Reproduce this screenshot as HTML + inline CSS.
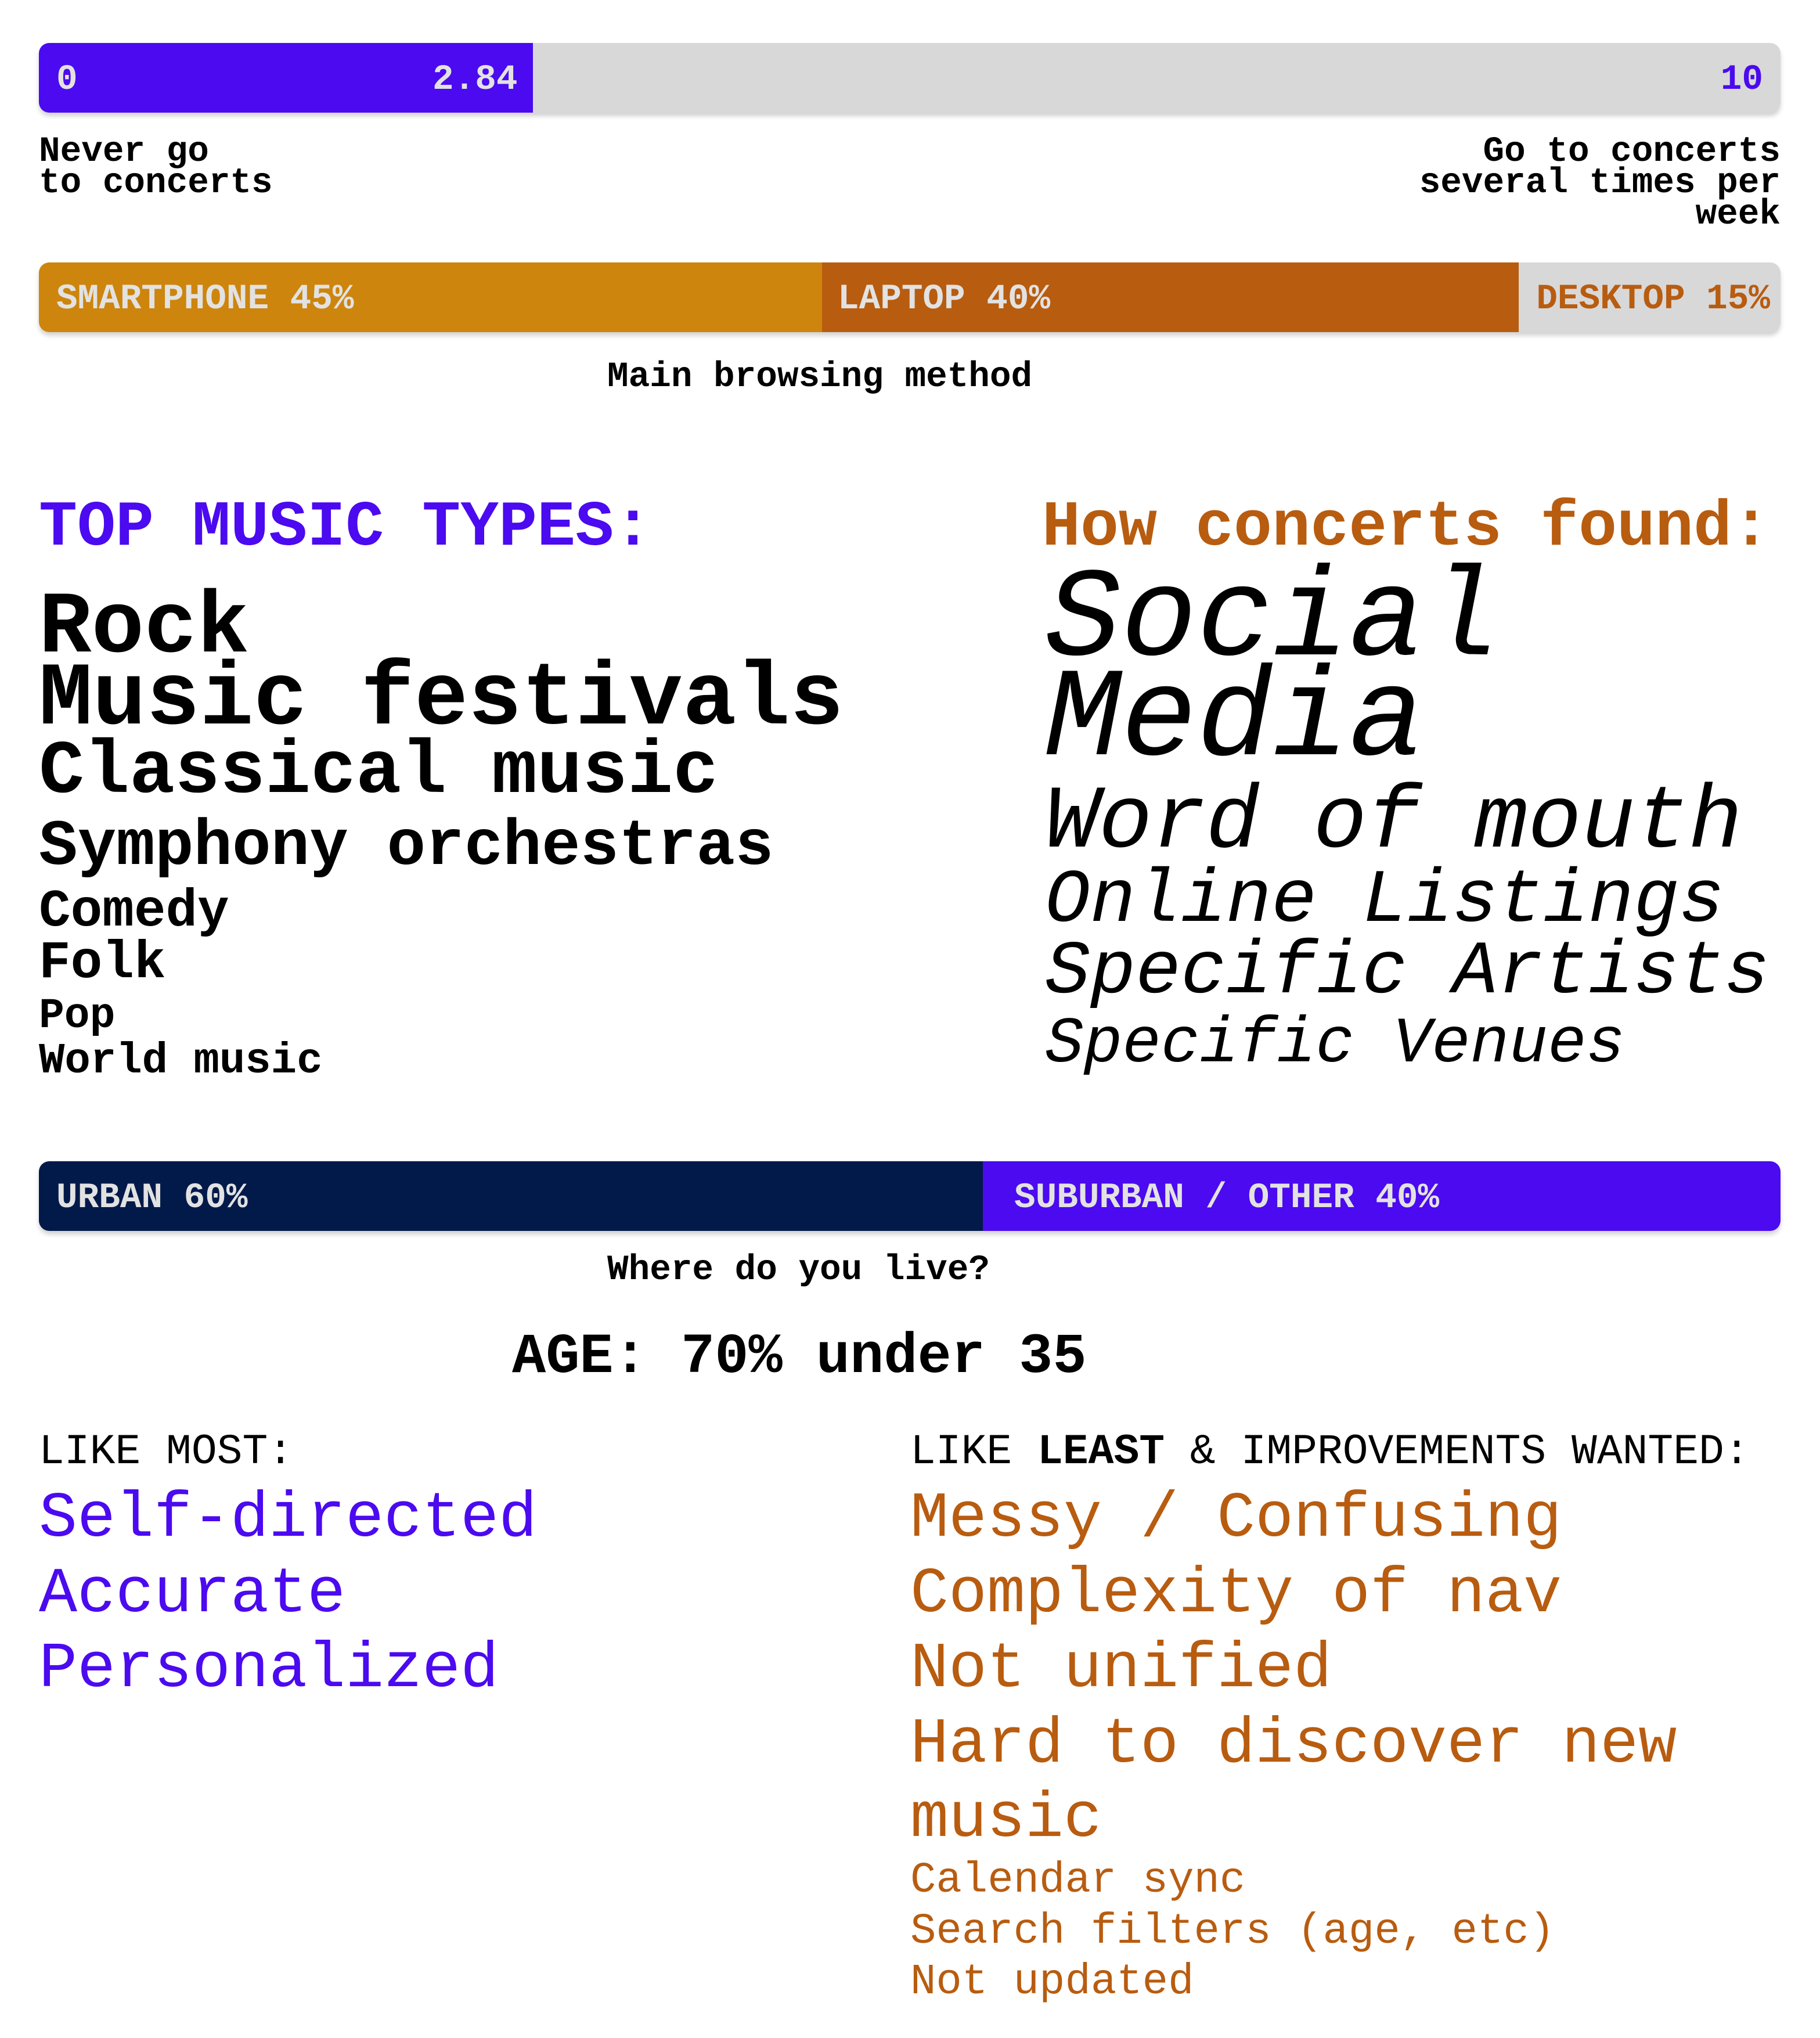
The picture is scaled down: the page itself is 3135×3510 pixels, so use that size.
<!DOCTYPE html>
<html><head><meta charset="utf-8"><style>
*{margin:0;padding:0;box-sizing:border-box}
body{width:3135px;height:3510px;background:#fff;position:relative;overflow:hidden;font-family:"Liberation Mono","Courier New",monospace;color:#000}
.t{position:absolute;white-space:nowrap;line-height:1;margin-top:7px}
.b{font-weight:bold}
.i{font-style:italic}
.bar{position:absolute;left:67px;width:3000px;height:120px;border-radius:18px;overflow:hidden;background:#d8d8d8;box-shadow:0 6px 8px rgba(0,0,0,.18)}
.seg{position:absolute;top:0;height:100%}
.bl{position:absolute;top:4px;height:120px;line-height:120px;font-weight:bold;font-size:61px;color:#e2e2e2;white-space:nowrap}
.p{color:#4b0aef}.o{color:#b85c10}
</style></head><body>

<div class="bar" style="top:74px">
  <div class="seg" style="left:0;width:851px;background:#4b0aef"></div>
  <div class="bl" style="left:30px">0</div>
  <div class="bl" style="left:678px">2.84</div>
  <div class="bl" style="right:30px;color:#4b0aef">10</div>
</div>
<div class="t b" style="left:67px;top:228px;font-size:61px;line-height:54px">Never go<br>to concerts</div>
<div class="t b" style="right:68px;top:228px;font-size:61px;line-height:54px;text-align:right">Go to concerts<br>several times per<br>week</div>

<div class="bar" style="top:452px">
  <div class="seg" style="left:0;width:1349px;background:#cd850d"></div>
  <div class="seg" style="left:1349px;width:1200px;background:#b85c0f"></div>
  <div class="bl" style="left:30px">SMARTPHONE 45%</div>
  <div class="bl" style="left:1376px">LAPTOP 40%</div>
  <div class="bl" style="right:18px;color:#b85c10">DESKTOP 15%</div>
</div>
<div class="t b" style="left:1046px;top:612px;font-size:61px">Main browsing method</div>

<div class="t b p" style="left:67px;top:848px;font-size:110px">TOP MUSIC TYPES:</div>
<div class="t b o" style="left:1795px;top:848px;font-size:110px">How concerts found:</div>

<div class="t b" style="left:67px;top:1000px;font-size:151px">Rock</div>
<div class="t b" style="left:67px;top:1122px;font-size:154px">Music festivals</div>
<div class="t b" style="left:67px;top:1259px;font-size:130px">Classical music</div>
<div class="t b" style="left:67px;top:1397px;font-size:111px">Symphony orchestras</div>
<div class="t b" style="left:67px;top:1518px;font-size:91px">Comedy</div>
<div class="t b" style="left:67px;top:1607px;font-size:91px">Folk</div>
<div class="t b" style="left:67px;top:1706px;font-size:73px">Pop</div>
<div class="t b" style="left:67px;top:1784px;font-size:74px">World music</div>

<div class="t i" style="left:1800px;top:954px;font-size:218px">Social</div>
<div class="t i" style="left:1800px;top:1126px;font-size:218px">Media</div>
<div class="t i" style="left:1800px;top:1334px;font-size:154px">Word of mouth</div>
<div class="t i" style="left:1800px;top:1481px;font-size:130px">Online Listings</div>
<div class="t i" style="left:1800px;top:1604px;font-size:130px">Specific Artists</div>
<div class="t i" style="left:1800px;top:1737px;font-size:111px">Specific Venues</div>

<div class="bar" style="top:2000px">
  <div class="seg" style="left:0;width:1626px;background:#021a4a"></div>
  <div class="seg" style="left:1626px;width:1374px;background:#4b0aef"></div>
  <div class="bl" style="left:30px">URBAN 60%</div>
  <div class="bl" style="left:1680px">SUBURBAN / OTHER 40%</div>
</div>
<div class="t b" style="left:1046px;top:2150px;font-size:61px">Where do you live?</div>

<div class="t b" style="left:882px;top:2283px;font-size:97px">AGE: 70% under 35</div>

<div class="t" style="left:67px;top:2457px;font-size:73px">LIKE MOST:</div>
<div class="t" style="left:1568px;top:2457px;font-size:73px">LIKE <b>LEAST</b> &amp; IMPROVEMENTS WANTED:</div>

<div class="t p" style="left:67px;top:2555px;font-size:110px">Self-directed</div>
<div class="t p" style="left:67px;top:2685px;font-size:110px">Accurate</div>
<div class="t p" style="left:67px;top:2814px;font-size:110px">Personalized</div>

<div class="t o" style="left:1568px;top:2555px;font-size:110px">Messy / Confusing</div>
<div class="t o" style="left:1568px;top:2685px;font-size:110px">Complexity of nav</div>
<div class="t o" style="left:1568px;top:2814px;font-size:110px">Not unified</div>
<div class="t o" style="left:1568px;top:2944px;font-size:110px">Hard to discover new</div>
<div class="t o" style="left:1568px;top:3072px;font-size:110px">music</div>
<div class="t o" style="left:1568px;top:3195px;font-size:74px">Calendar sync</div>
<div class="t o" style="left:1568px;top:3283px;font-size:74px">Search filters (age, etc)</div>
<div class="t o" style="left:1568px;top:3370px;font-size:74px">Not updated</div>

</body></html>
